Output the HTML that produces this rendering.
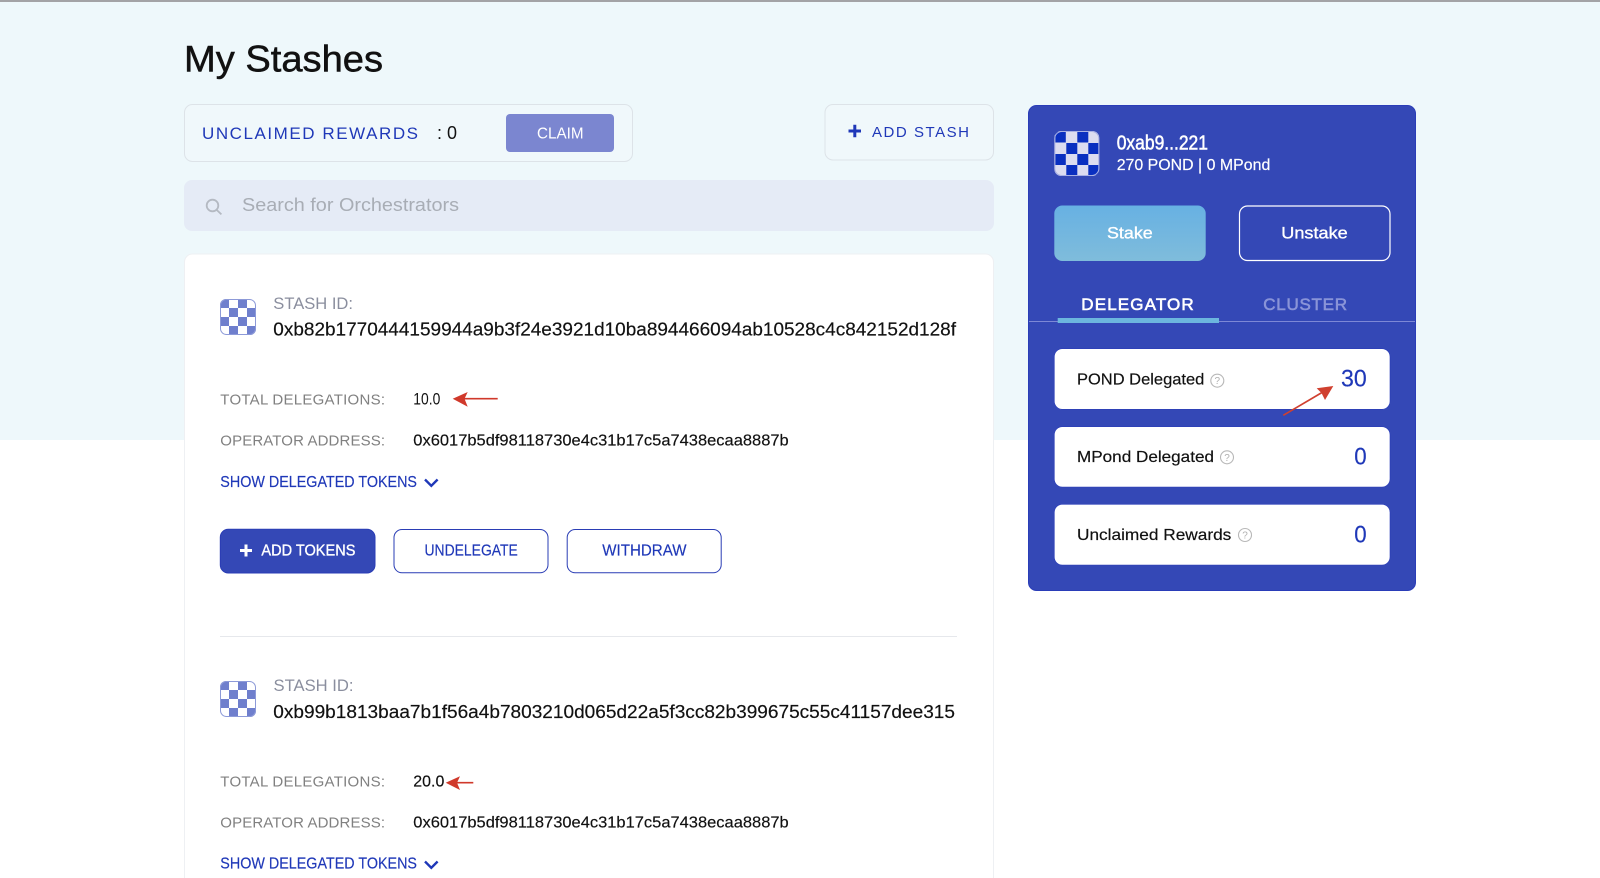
<!DOCTYPE html>
<html lang="en">
<head>
<meta charset="utf-8">
<title>My Stashes</title>
<style>
html,body{margin:0;padding:0;width:1600px;height:878px;overflow:hidden;background:#fff}
svg{display:block}
text{font-family:"Liberation Sans",sans-serif;white-space:pre}
.m{stroke:currentColor;stroke-width:.35px}
.l{stroke:currentColor;stroke-width:.18px}
.blue{fill:#1f38b8;color:#1f38b8}
.gray{fill:#808080;color:#808080}
.blk{fill:#111;color:#111}
.w{fill:#fff;color:#fff}
.s18{font-size:18px}.s16{font-size:16px}.s17{font-size:17px}.s15{font-size:15px}
</style>
</head>
<body>
<svg width="1600" height="878" viewBox="0 0 1600 878" xmlns="http://www.w3.org/2000/svg">
<defs>
  <clipPath id="c1"><rect x="0" y="0" width="36" height="36" rx="6"/></clipPath>
  <clipPath id="c2"><rect x="0" y="0" width="45" height="45" rx="7"/></clipPath>
  <g id="chk">
    <rect width="36" height="36" fill="#fff"/>
    <g fill="#6f7fcd">
      <rect x="0" y="0" width="9" height="9"/><rect x="18" y="0" width="9" height="9"/>
      <rect x="9" y="9" width="9" height="9"/><rect x="27" y="9" width="9" height="9"/>
      <rect x="0" y="18" width="9" height="9"/><rect x="18" y="18" width="9" height="9"/>
      <rect x="9" y="27" width="9" height="9"/><rect x="27" y="27" width="9" height="9"/>
    </g>
  </g>
  <g id="qm">
    <circle cx="0" cy="0" r="6.5" fill="none" stroke="#b8b8b8" stroke-width="1.1"/>
    <text x="0" y="3.5" font-size="10" text-anchor="middle" fill="#b0b0b0">?</text>
  </g>
</defs>

<!-- backgrounds -->
<rect x="0" y="0" width="1600" height="440" fill="#eef8fb"/>
<rect x="0" y="0" width="1600" height="2" fill="#a3a3a6"/>

<!-- title -->
<text x="184" y="71.5" font-size="37" class="blk" style="stroke:#111;stroke-width:.5px" textLength="199" lengthAdjust="spacingAndGlyphs">My Stashes</text>

<!-- unclaimed box -->
<rect x="184.5" y="104.5" width="448" height="57" rx="8" fill="#f0f8fb" stroke="#dde3e8"/>
<text x="202" y="139" class="blue s17" textLength="216" lengthAdjust="spacing">UNCLAIMED REWARDS</text>
<text x="437" y="139" class="blk s18" textLength="20" lengthAdjust="spacing">: 0</text>
<rect x="506" y="114" width="108" height="38" rx="4" fill="#7b86d0"/>
<text x="537" y="138.5" class="w s16" textLength="46.5" lengthAdjust="spacingAndGlyphs">CLAIM</text>

<!-- add stash -->
<rect x="825" y="104.5" width="168.5" height="55.5" rx="8" fill="#f0f8fb" stroke="#dde3e8"/>
<path d="M848.5 131h12.5M854.8 124.8v12.5" stroke="#1f38b8" stroke-width="3" fill="none"/>
<text x="872" y="137" class="blue s15" textLength="97" lengthAdjust="spacing">ADD STASH</text>

<!-- search -->
<rect x="184" y="180" width="810" height="51" rx="8" fill="#e5ebf6"/>
<circle cx="212.5" cy="205.5" r="5.8" fill="none" stroke="#b4b9c2" stroke-width="1.8"/>
<path d="M216.8 210l4.6 4.4" stroke="#b4b9c2" stroke-width="1.8" fill="none"/>
<text x="242" y="211" class="s18" fill="#a8adb5" textLength="217" lengthAdjust="spacingAndGlyphs">Search for Orchestrators</text>

<!-- card -->
<path d="M184.5 890V262a8 8 0 0 1 8-8H985.5a8 8 0 0 1 8 8V890Z" fill="#fff" stroke="#eef0f3"/>

<!-- stash 1 -->
<g transform="translate(220 299)"><g clip-path="url(#c1)"><use href="#chk"/></g><rect x=".5" y=".5" width="35" height="35" rx="6" fill="none" stroke="#8d9ad8"/></g>
<text x="273.3" y="308.8" class="s17" fill="#8a8e9e" textLength="79.7" lengthAdjust="spacingAndGlyphs">STASH ID:</text>
<text x="273.3" y="335.6" class="blk s18 l" textLength="682.7" lengthAdjust="spacingAndGlyphs">0xb82b1770444159944a9b3f24e3921d10ba894466094ab10528c4c842152d128f</text>

<text x="220.3" y="404.3" class="gray s15" textLength="164.7" lengthAdjust="spacing">TOTAL DELEGATIONS:</text>
<text x="413.3" y="404.3" class="blk s17" textLength="27" lengthAdjust="spacingAndGlyphs">10.0</text>
<path d="M497.7 398.7H462" stroke="#d0392b" stroke-width="1.6" fill="none"/>
<path d="M452.7 398.7L467.7 392L464.5 398.7L467.7 406.7Z" fill="#d0392b"/>

<text x="220.3" y="445.7" class="gray s15" textLength="164.7" lengthAdjust="spacing">OPERATOR ADDRESS:</text>
<text x="413.3" y="445.7" class="blk s16 l" textLength="375.4" lengthAdjust="spacingAndGlyphs">0x6017b5df98118730e4c31b17c5a7438ecaa8887b</text>

<text x="220.3" y="486.8" class="blue s16 l" textLength="196.7" lengthAdjust="spacingAndGlyphs">SHOW DELEGATED TOKENS</text>
<path d="M425 479.5l6.3 6.3 6.3-6.3" fill="none" stroke="#1f38b8" stroke-width="2.4"/>

<!-- buttons -->
<rect x="220.3" y="529.3" width="154.7" height="43.7" rx="8" fill="#3448b6" stroke="#2a3db5"/>
<path d="M240 550.5h12M246 544.5v12" stroke="#fff" stroke-width="3" fill="none"/>
<text x="261.4" y="555.7" class="w s16 m" textLength="94" lengthAdjust="spacingAndGlyphs">ADD TOKENS</text>
<rect x="394" y="529.5" width="154" height="43.3" rx="8" fill="#fff" stroke="#2a3db5"/>
<text x="424.5" y="555.7" class="blue s16 l" textLength="93.3" lengthAdjust="spacingAndGlyphs">UNDELEGATE</text>
<rect x="567.2" y="529.5" width="154" height="43.3" rx="8" fill="#fff" stroke="#2a3db5"/>
<text x="602.3" y="555.7" class="blue s16 l" textLength="84.2" lengthAdjust="spacingAndGlyphs">WITHDRAW</text>

<rect x="220" y="636" width="737" height="1" fill="#e6e8ec"/>

<!-- stash 2 -->
<g transform="translate(220 681)"><g clip-path="url(#c1)"><use href="#chk"/></g><rect x=".5" y=".5" width="35" height="35" rx="6" fill="none" stroke="#8d9ad8"/></g>
<text x="273.5" y="691.2" class="s17" fill="#8a8e9e" textLength="80" lengthAdjust="spacingAndGlyphs">STASH ID:</text>
<text x="273.3" y="718" class="blk s18 l" textLength="681.7" lengthAdjust="spacingAndGlyphs">0xb99b1813baa7b1f56a4b7803210d065d22a5f3cc82b399675c55c41157dee315</text>

<text x="220.3" y="786.7" class="gray s15" textLength="164.7" lengthAdjust="spacing">TOTAL DELEGATIONS:</text>
<text x="413.3" y="786.7" class="blk s16 l" textLength="31" lengthAdjust="spacingAndGlyphs">20.0</text>
<path d="M473.3 782.7H455" stroke="#d0392b" stroke-width="1.6" fill="none"/>
<path d="M445.7 782.7L460 776.3L457 782.7L460 790Z" fill="#d0392b"/>

<text x="220.3" y="827.7" class="gray s15" textLength="164.7" lengthAdjust="spacing">OPERATOR ADDRESS:</text>
<text x="413.3" y="827.7" class="blk s16 l" textLength="375.4" lengthAdjust="spacingAndGlyphs">0x6017b5df98118730e4c31b17c5a7438ecaa8887b</text>

<text x="220.3" y="868.5" class="blue s16 l" textLength="196.7" lengthAdjust="spacingAndGlyphs">SHOW DELEGATED TOKENS</text>
<path d="M425 861.5l6.3 6.3 6.3-6.3" fill="none" stroke="#1f38b8" stroke-width="2.4"/>

<!-- side panel -->
<rect x="1028.5" y="105.5" width="387" height="485" rx="8" fill="#3448b6" stroke="#2a3db8"/>

<g transform="translate(1054.3 131)">
  <g clip-path="url(#c2)">
    <rect width="45" height="45" fill="#dcdcf0"/>
    <g fill="#0a2fc0">
      <rect x="1" y="1" width="10.5" height="10.5"/><rect x="23" y="1" width="11" height="10.5"/>
      <rect x="12" y="12" width="11" height="11"/><rect x="34" y="12" width="10.5" height="11"/>
      <rect x="1" y="23" width="10.5" height="11"/><rect x="23" y="23" width="11" height="11"/>
      <rect x="12" y="34" width="11" height="10"/><rect x="34" y="34" width="10.5" height="10"/>
    </g>
  </g>
  <rect x=".5" y=".5" width="44" height="44" rx="7" fill="none" stroke="#a8b0e4"/>
</g>

<text x="1116.7" y="149.3" font-size="20" class="w" style="stroke:#fff;stroke-width:.5px" textLength="91.3" lengthAdjust="spacingAndGlyphs">0xab9...221</text>
<text x="1116.7" y="170" class="w s16 l" textLength="153.6" lengthAdjust="spacingAndGlyphs">270 POND | 0 MPond</text>

<defs><linearGradient id="g" x1="0" y1="0" x2="0" y2="1"><stop offset="0" stop-color="#67b1e3"/><stop offset="1" stop-color="#7fbcdb"/></linearGradient></defs>
<rect x="1054.3" y="205.5" width="151.4" height="55.5" rx="8" fill="url(#g)"/>
<text x="1107" y="238.7" class="w s17 m" textLength="45.7" lengthAdjust="spacingAndGlyphs">Stake</text>
<rect x="1239.5" y="206" width="150.5" height="54.5" rx="8" fill="#3448b6" stroke="#fff" stroke-width="1.2"/>
<text x="1281.3" y="238.7" class="w s17 m" textLength="66.4" lengthAdjust="spacingAndGlyphs">Unstake</text>

<text x="1081.3" y="310" class="w s17" textLength="112.4" lengthAdjust="spacing" style="stroke:#fff;stroke-width:.6px">DELEGATOR</text>
<text x="1263.3" y="310" class="s17" fill="#8a94d8" textLength="83.7" lengthAdjust="spacing" style="stroke:#8a94d8;stroke-width:.6px">CLUSTER</text>
<rect x="1029" y="321" width="386" height="1" fill="#7d88d6"/>
<rect x="1057.7" y="318" width="161.3" height="5" fill="#6cb6de"/>

<!-- stat cards -->
<rect x="1054.3" y="348.7" width="335.7" height="60.6" rx="8" fill="#fff" stroke="#2a3db8" stroke-width=".6"/>
<rect x="1054.3" y="426.7" width="335.7" height="60.3" rx="8" fill="#fff" stroke="#2a3db8" stroke-width=".6"/>
<rect x="1054.3" y="504.3" width="335.7" height="60.7" rx="8" fill="#fff" stroke="#2a3db8" stroke-width=".6"/>

<text x="1077" y="384.3" class="blk s16 l" textLength="127.3" lengthAdjust="spacingAndGlyphs">POND Delegated</text>
<use href="#qm" x="1217.3" y="380.7"/>
<text x="1341" y="386.7" font-size="24" class="blue l" textLength="25.7" lengthAdjust="spacingAndGlyphs">30</text>

<text x="1077" y="462" class="blk s16 l" textLength="137" lengthAdjust="spacingAndGlyphs">MPond Delegated</text>
<use href="#qm" x="1227" y="457.3"/>
<text x="1354.3" y="464.3" font-size="24" class="blue l" textLength="12.4" lengthAdjust="spacingAndGlyphs">0</text>

<text x="1077" y="540" class="blk s16 l" textLength="154.3" lengthAdjust="spacingAndGlyphs">Unclaimed Rewards</text>
<use href="#qm" x="1245" y="535"/>
<text x="1354.3" y="542.3" font-size="24" class="blue l" textLength="12.4" lengthAdjust="spacingAndGlyphs">0</text>

<!-- red arrow on POND -->
<path d="M1283.3 415.3L1322 392.5" stroke="#d0402f" stroke-width="1.7" fill="none"/>
<path d="M1333.3 386L1316.7 388.3L1321.5 393L1325 400Z" fill="#d0402f"/>
</svg>
</body>
</html>
